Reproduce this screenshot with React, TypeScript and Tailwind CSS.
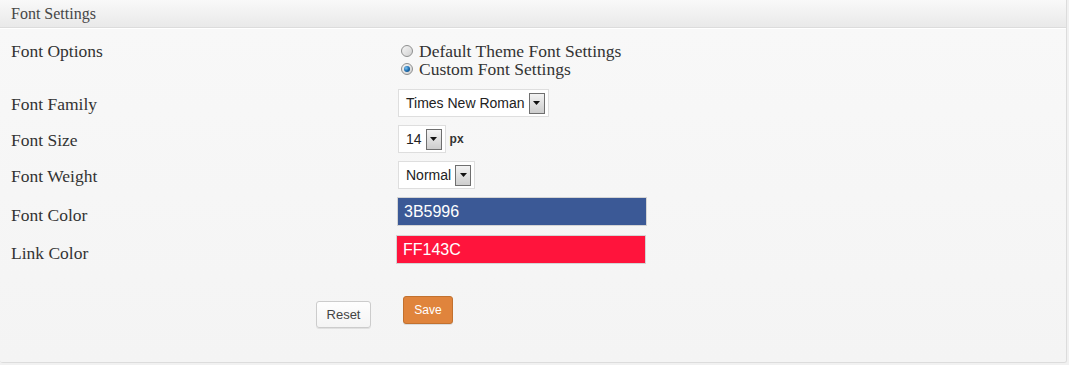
import React, { useState } from 'react';

const serif = { fontFamily: '"Liberation Serif", "Times New Roman", serif' };
const sans = { fontFamily: '"Liberation Sans", Arial, sans-serif' };

const Radio = ({ checked }: { checked: boolean }) => (
  <span className="relative inline-flex h-[12px] w-[12px] shrink-0 items-center justify-center rounded-full border border-[#8e8f8f] bg-linear-to-br from-[#f4f4f4] via-[#e4e4e4] to-[#cfcfcf]">
    {checked && (
      <span className="h-[6px] w-[6px] rounded-full bg-radial-[at_35%_35%] from-[#7ec3f0] via-[#1f6fb2] to-[#0c3d6b]" />
    )}
  </span>
);

const ArrowBox = () => (
  <span className="flex h-[21px] w-[16px] shrink-0 items-center justify-center border border-[#6f6f6f] bg-linear-to-b from-[#f3f3f3] to-[#cdcdcd]">
    <svg width="7" height="4" viewBox="0 0 7 4">
      <path d="M0 0 L7 0 L3.5 4 Z" fill="#111" />
    </svg>
  </span>
);

const SelectBox = ({ value }: { value: string }) => (
  <div
    className="flex h-[28px] items-center gap-[4px] border border-[#dedede] bg-white pl-[7px] pr-[3px] text-[14px] text-[#222]"
    style={sans}
  >
    <span>{value}</span>
    <ArrowBox />
  </div>
);

const Label = ({ children, className = '' }: { children: React.ReactNode; className?: string }) => (
  <div className={`w-[398px] shrink-0 pl-[11px] text-[17.5px] leading-[18px] text-[#333] ${className}`} style={serif}>
    {children}
  </div>
);

export default function App() {
  const [option, setOption] = useState<'default' | 'custom'>('custom');

  return (
    <div className="h-[365px] w-full bg-[#f1f1f1]">
      <div className="flex h-[363px] w-[1067px] flex-col overflow-hidden rounded-b-[3px] border-r border-b border-[#dcdcdc]">
        <div
          className="flex h-[28px] shrink-0 items-center border-b border-[#dcdcdc] bg-linear-to-b from-[#f9f9f9] to-[#e9e9e9] pl-[11px] text-[16px] text-[#464646]"
          style={serif}
        >
          Font Settings
        </div>

        <div className="flex flex-1 flex-col border-t border-white bg-linear-to-b from-[#f8f8f8] to-[#f4f4f4]">
          {/* options */}
          <div className="mt-[13px] flex items-start">
            <Label>Font Options</Label>
            <div className="flex flex-col pl-[3px] text-[17.5px] leading-[18px] text-[#333]" style={serif}>
              <label className="flex items-center gap-[6px]" onClick={() => setOption('default')}>
                <Radio checked={option === 'default'} />
                <span>Default Theme Font Settings</span>
              </label>
              <label className="flex items-center gap-[6px]" onClick={() => setOption('custom')}>
                <Radio checked={option === 'custom'} />
                <span>Custom Font Settings</span>
              </label>
            </div>
          </div>

          <div className="mt-[11px] flex items-center">
            <Label className="mt-[1px]">Font Family</Label>
            <SelectBox value="Times New Roman" />
          </div>

          <div className="mt-[8px] flex items-center">
            <Label className="mt-[1px]">Font Size</Label>
            <SelectBox value="14" />
            <span className="ml-[4px] text-[12px] font-bold text-[#333]" style={sans}>
              px
            </span>
          </div>

          <div className="mt-[8px] flex items-center">
            <Label className="mt-[1px]">Font Weight</Label>
            <SelectBox value="Normal" />
          </div>

          <div className="mt-[8px] flex items-center">
            <Label className="mt-[6px]">Font Color</Label>
            <div
              className="-ml-[1px] flex h-[29px] w-[250px] items-center border border-[#d4d4d4] bg-[#3B5996] pl-[6px] text-[16px] text-white"
              style={sans}
            >
              3B5996
            </div>
          </div>

          <div className="mt-[9px] flex items-center">
            <Label className="mt-[6px]">Link Color</Label>
            <div
              className="-ml-[2px] flex h-[29px] w-[250px] items-center border border-[#d4d4d4] bg-[#FF143C] pl-[6px] text-[16px] text-white"
              style={sans}
            >
              FF143C
            </div>
          </div>

          <div className="mt-[32px] flex items-start">
            <div className="flex w-[387px] shrink-0 justify-end pr-[16px]">
              <button
                className="mt-[5px] h-[27px] w-[55px] rounded-[3px] border border-[#cccccc] bg-linear-to-b from-[#fefefe] to-[#f4f4f4] text-[13px] text-[#444] shadow-[0_1px_0_rgba(0,0,0,0.08)]"
                style={sans}
              >
                Reset
              </button>
            </div>
            <button
              className="ml-[16px] h-[28px] w-[50px] rounded-[3px] border border-[#c2712f] bg-[#e0843c] text-[12px] text-white shadow-[0_1px_0_rgba(0,0,0,0.1)]"
              style={sans}
            >
              Save
            </button>
          </div>
        </div>
      </div>
    </div>
  );
}
